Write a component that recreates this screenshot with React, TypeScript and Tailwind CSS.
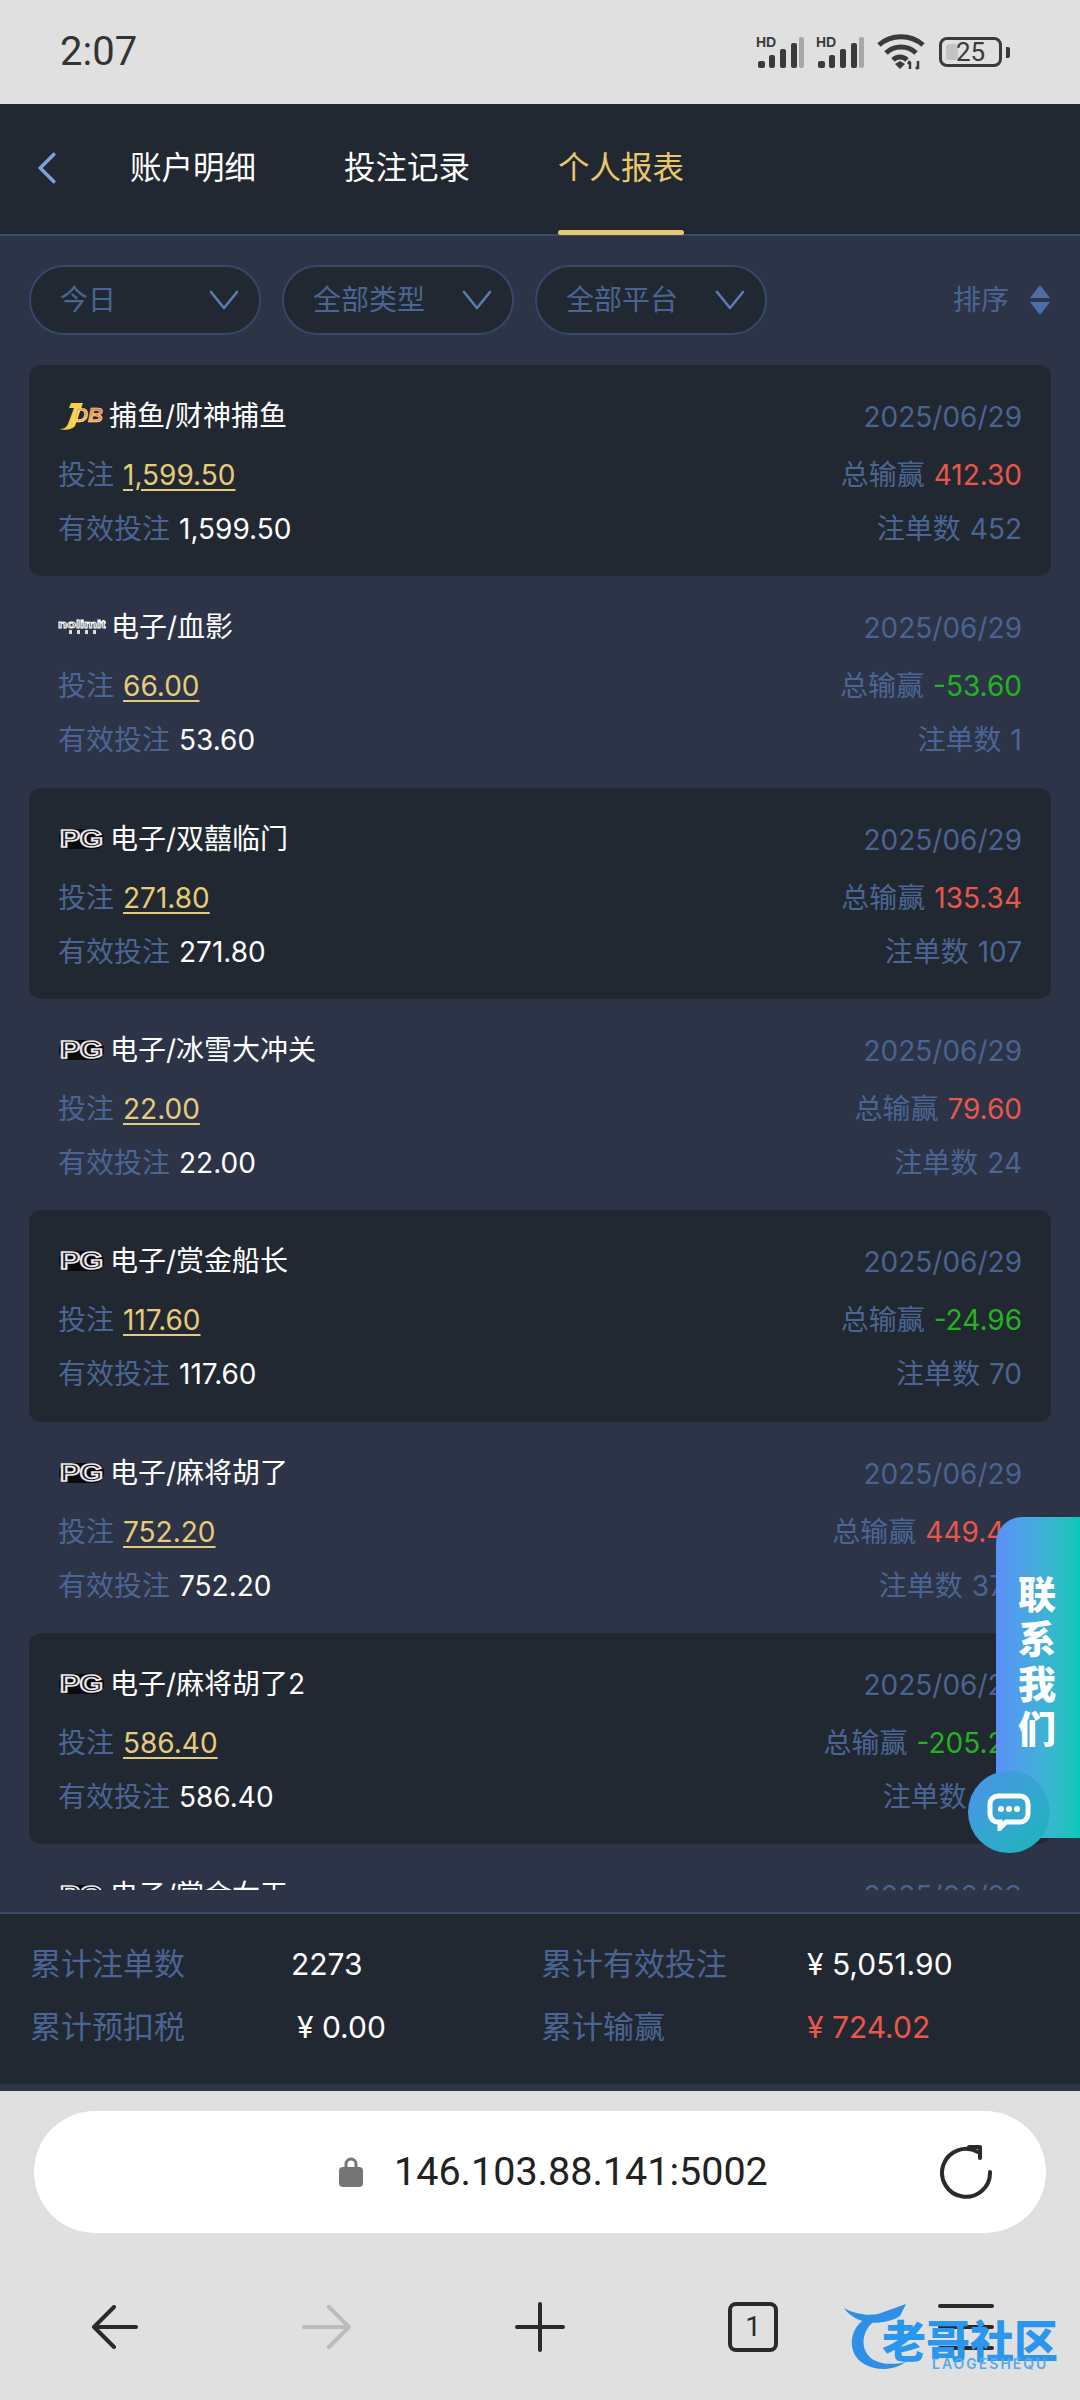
import { ChevronLeft } from 'lucide-react';

type Row = {
  logo: 'jdb' | 'nolimit' | 'pg';
  title: string;
  bet: string;
  valid: string;
  win: string;
  count: string;
};

const rows: Row[] = [
  { logo: 'jdb', title: '捕鱼/财神捕鱼', bet: '1,599.50', valid: '1,599.50', win: '412.30', count: '452' },
  { logo: 'nolimit', title: '电子/血影', bet: '66.00', valid: '53.60', win: '-53.60', count: '1' },
  { logo: 'pg', title: '电子/双囍临门', bet: '271.80', valid: '271.80', win: '135.34', count: '107' },
  { logo: 'pg', title: '电子/冰雪大冲关', bet: '22.00', valid: '22.00', win: '79.60', count: '24' },
  { logo: 'pg', title: '电子/赏金船长', bet: '117.60', valid: '117.60', win: '-24.96', count: '70' },
  { logo: 'pg', title: '电子/麻将胡了', bet: '752.20', valid: '752.20', win: '449.40', count: '372' },
  { logo: 'pg', title: '电子/麻将胡了2', bet: '586.40', valid: '586.40', win: '-205.26', count: '310' },
  { logo: 'pg', title: '电子/赏金女王', bet: '310.00', valid: '310.00', win: '120.00', count: '60' },
];

function Signal() {
  return (
    <svg width="48" height="34" viewBox="0 0 48 34">
      <text x="0" y="12" fontSize="14" fontWeight="700" fontFamily="Liberation Sans" fill="#3a3a3a">HD</text>
      <rect x="2" y="26" width="7" height="7" rx="2" fill="#3a3a3a" />
      <rect x="13" y="20" width="6" height="13" rx="2" fill="#3a3a3a" />
      <rect x="24" y="14" width="6" height="19" rx="2" fill="#3a3a3a" />
      <rect x="35" y="8" width="6" height="25" rx="2" fill="#3a3a3a" />
      <rect x="43" y="2" width="5" height="31" rx="2" fill="#a8a8a8" />
    </svg>
  );
}

function StatusIcons() {
  return (
    <div className="flex items-center">
      <Signal />
      <div className="ml-[12px]">
        <Signal />
      </div>
      <svg className="ml-[13px]" width="48" height="36" viewBox="0 0 48 36" fill="none" stroke="#3a3a3a" strokeWidth="5">
        <path d="M2 11C14 0 34 0 46 11" />
        <path d="M9 19C17 11 31 11 39 19" />
        <path d="M16 26C20 22 26 22 30 26" />
        <path d="M23 35l-5-5 5-3 5 3z" fill="#3a3a3a" stroke="none" />
        <path d="M33 35v-7M31 30l2-3M41 27v8M39 33l2 2" strokeWidth="2.5" />
      </svg>
      <div className="relative ml-[14px] flex h-[30px] w-[63px] items-center justify-center rounded-[8px] border-[3px] border-[#3a3a3a] text-[26px] leading-none text-[#3a3a3a] font-['Roboto',sans-serif]">
        <span className="absolute left-[4px] top-[4px] h-[16px] w-[12px] rounded-[3px] bg-[#c4c4c4]" />
        <span className="relative">25</span>
      </div>
      <div className="ml-[4px] h-[11px] w-[4px] rounded-r-[2px] bg-[#3a3a3a]" />
    </div>
  );
}

function Logo({ kind }: { kind: Row['logo'] }) {
  if (kind === 'jdb') {
    return (
      <svg width="46" height="28" viewBox="0 0 46 28" className="shrink-0">
        <defs>
          <linearGradient id="jdbFill" x1="0" y1="1" x2="1" y2="0">
            <stop offset="0" stopColor="#f7d53f" />
            <stop offset="0.5" stopColor="#f5a531" />
            <stop offset="1" stopColor="#ee4f4a" />
          </linearGradient>
        </defs>
        <path d="M1 27c5 0 7-1 9-5l6-16h-5l2-5h12l-8 23c-2 3-10 5-16 3z" fill="#f5cf45" />
        <text x="15" y="20" fontSize="21" fontWeight="900" fontStyle="italic" fontFamily="Liberation Sans" fill="url(#jdbFill)" stroke="#ffe9c9" strokeWidth="0.6" textLength="30" lengthAdjust="spacingAndGlyphs">DB</text>
      </svg>
    );
  }
  if (kind === 'nolimit') {
    return (
      <svg width="48" height="16" viewBox="0 0 48 16" className="shrink-0">
        <text x="0" y="9" fontSize="11" fontWeight="700" fontFamily="Liberation Sans" fill="#1a1d28" stroke="#fff" strokeWidth="0.9" textLength="48" lengthAdjust="spacingAndGlyphs">nolimit</text>
        <g fill="#ddd">
          <rect x="11" y="11" width="3" height="4" />
          <rect x="19" y="11" width="3" height="4" />
          <rect x="27" y="11" width="3" height="4" />
          <rect x="35" y="11" width="3" height="4" />
        </g>
      </svg>
    );
  }
  return (
    <svg width="47" height="24" viewBox="0 0 47 24" className="shrink-0">
      <rect x="1" y="2" width="45" height="20" rx="9" fill="#0b0b0d" />
      <text x="2" y="20" fontSize="23" fontWeight="700" fontFamily="Liberation Sans" fill="#16161a" stroke="#ece8ee" strokeWidth="1.7" textLength="43" lengthAdjust="spacingAndGlyphs">PG</text>
    </svg>
  );
}

function winColor(win: string) {
  return win.startsWith('-') ? 'text-[#22b41f]' : 'text-[#e8574a]';
}

function Card({ row, dark }: { row: Row; dark: boolean }) {
  return (
    <div className={`h-[211.33px] shrink-0 rounded-[12px] px-[29px] pt-[31px] text-[28px] leading-[40px] ${dark ? 'bg-[#222831]' : ''}`}>
      <div className="flex items-center justify-between">
        <div className="flex items-center gap-[5px] text-white">
          <Logo kind={row.logo} />
          <span>{row.title}</span>
        </div>
        <span className="translate-y-[1px] text-[#4a6390]">2025/06/29</span>
      </div>
      <div className="mt-[19px] flex justify-between">
        <div className="flex gap-[9px]">
          <span className="text-[#4a6593]">投注</span>
          <span className="text-[#e6cb7a] underline underline-offset-[4px]">{row.bet}</span>
        </div>
        <div className="flex gap-[9px]">
          <span className="text-[#4a6593]">总输赢</span>
          <span className={winColor(row.win)}>{row.win}</span>
        </div>
      </div>
      <div className="mt-[14px] flex justify-between">
        <div className="flex gap-[9px]">
          <span className="text-[#4a6593]">有效投注</span>
          <span className="text-white">{row.valid}</span>
        </div>
        <div className="flex gap-[9px] text-[#4a6593]">
          <span>注单数</span>
          <span>{row.count}</span>
        </div>
      </div>
    </div>
  );
}

function Pill({ label }: { label: string }) {
  return (
    <div className="flex h-[70px] w-[232px] items-center justify-between rounded-full border-2 border-[#36476a] bg-[#222831] pl-[29px] pr-[20px] text-[28px] text-[#4a6593]">
      <span>{label}</span>
      <svg width="30" height="20" viewBox="0 0 30 20" fill="none" stroke="#5a7cb4" strokeWidth="2.6" strokeLinecap="round" strokeLinejoin="round">
        <path d="M2 2l13 16L28 2" />
      </svg>
    </div>
  );
}

function Summary({ label, value, offset, red }: { label: string; value: string; offset: string; red?: boolean }) {
  return (
    <div className="flex items-center">
      <span className="text-[31px] text-[#4a6593]">{label}</span>
      <span className={`text-[30px] ${offset} ${red ? 'text-[#e8574a]' : 'text-white'}`}>{value}</span>
    </div>
  );
}

export default function App() {
  return (
    <div className="relative flex h-[2400px] w-[1080px] flex-col overflow-hidden bg-[#2d3447] font-['Inter','Noto_Sans_CJK_SC',sans-serif]">
      <div className="flex h-[104px] shrink-0 items-center justify-between bg-[#e0e0e0] pl-[60px] pr-[70px]">
        <span className="text-[40px] text-[#333] font-['Roboto',sans-serif]">2:07</span>
        <StatusIcons />
      </div>

      <div className="flex h-[132px] shrink-0 items-stretch border-b-2 border-[#3a4c6e] bg-[#222831]">
        <div className="flex w-[130px] items-center pl-[20px]">
          <ChevronLeft size={54} strokeWidth={1.6} className="mb-[2px] text-[#7ba1d8]" />
        </div>
        <div className="flex gap-[88px] text-[31.5px]">
          <div className="mb-[2px] flex items-center text-white">账户明细</div>
          <div className="mb-[2px] flex items-center text-white">投注记录</div>
          <div className="relative mb-[2px] flex items-center text-[#e8c76d]">
            个人报表
            <span className="absolute bottom-[-3px] left-0 h-[5px] w-full rounded-full bg-[#e8c76d]" />
          </div>
        </div>
      </div>

      <div className="flex items-center px-[29px] pt-[29px]">
        <div className="flex gap-[21px]">
          <Pill label="今日" />
          <Pill label="全部类型" />
          <Pill label="全部平台" />
        </div>
        <div className="ml-auto flex items-center gap-[20px] text-[28px] text-[#4a6593]">
          <span>排序</span>
          <svg width="22" height="30" viewBox="0 0 22 30" fill="#4a6fa5">
            <path d="M11 0l10 13H1z" />
            <path d="M11 30L1 17h20z" />
          </svg>
        </div>
      </div>

      <div className="mx-[29px] mt-[30px] flex h-[1525px] flex-col overflow-hidden">
        {rows.map((row, i) => (
          <Card key={row.title} row={row} dark={i % 2 === 0} />
        ))}
      </div>

      <div className="mt-[22px] h-[172px] shrink-0 border-t-2 border-[#3a4c6e] bg-[#222831] pl-[30px] pt-[30px] leading-[40px]">
        <div className="grid grid-cols-[511px_1fr] gap-y-[23px]">
          <Summary label="累计注单数" value="2273" offset="ml-[106px]" />
          <Summary label="累计有效投注" value="¥ 5,051.90" offset="ml-[80px]" />
          <Summary label="累计预扣税" value="¥ 0.00" offset="ml-[112px]" />
          <Summary label="累计输赢" value="¥ 724.02" offset="ml-[142px]" red />
        </div>
      </div>

      <div className="mt-[7px] flex flex-1 flex-col bg-[#e0e0e0]">
        <div className="mx-[34px] mt-[20px] flex h-[122px] shrink-0 items-center rounded-full bg-white pl-[305px] pr-[52px]">
          <svg width="24" height="30" viewBox="0 0 24 30" className="shrink-0">
            <path d="M7 11V7a5 5 0 0 1 10 0v4" fill="none" stroke="#757575" strokeWidth="3" />
            <rect x="0" y="10" width="24" height="20" rx="4" fill="#757575" />
          </svg>
          <span className="ml-[31px] text-[39.5px] text-[#222] font-['Roboto',sans-serif]">146.103.88.141:5002</span>
          <svg className="ml-auto" width="54" height="54" viewBox="0 0 54 54" fill="none" stroke="#2a2a2a" strokeWidth="4" strokeLinecap="round" strokeLinejoin="round">
            <path d="M38 7A24 24 0 1 0 50 27" />
            <path d="M29 2h11v11" />
          </svg>
        </div>
        <div className="grid grid-cols-5 items-center px-[7px] pt-[69px]">
          <div className="flex justify-center">
            <svg width="48" height="44" viewBox="0 0 48 44" fill="none" stroke="#2a2a2a" strokeWidth="4" strokeLinecap="round" strokeLinejoin="round">
              <path d="M24 2L4 22l20 20M4 22h42" />
            </svg>
          </div>
          <div className="flex justify-center">
            <svg width="52" height="44" viewBox="0 0 52 44" fill="none" stroke="#bcbcbc" strokeWidth="4" strokeLinecap="round" strokeLinejoin="round">
              <path d="M28 2l20 20-20 20M48 22H3" />
            </svg>
          </div>
          <div className="flex justify-center">
            <svg width="50" height="50" viewBox="0 0 50 50" fill="none" stroke="#2a2a2a" strokeWidth="4" strokeLinecap="round">
              <path d="M25 2v46M2 25h46" />
            </svg>
          </div>
          <div className="flex justify-center">
            <div className="flex h-[50px] w-[50px] items-center justify-center rounded-[8px] border-[4px] border-[#2a2a2a] text-[28px] leading-none text-[#2a2a2a] font-['Roboto',sans-serif]">1</div>
          </div>
          <div className="flex justify-center">
            <div className="flex w-[56px] flex-col gap-[17px]">
              <div className="h-[4px] rounded-full bg-[#2a2a2a]" />
              <div className="h-[4px] rounded-full bg-[#2a2a2a]" />
              <div className="h-[4px] rounded-full bg-[#2a2a2a]" />
            </div>
          </div>
        </div>
      </div>

      {/* contact widget */}
      <div className="absolute left-[996px] top-[1517px] flex h-[321px] w-[84px] flex-col items-center rounded-l-[26px] bg-gradient-to-r from-[#5b8ff9] to-[#00c9b7] pt-[55px] pr-[2px] text-[38px] font-black leading-[45px] text-white">
        <span>联</span>
        <span>系</span>
        <span>我</span>
        <span>们</span>
      </div>
      <div className="absolute left-[968px] top-[1771px] flex h-[82px] w-[82px] items-center justify-center rounded-full bg-gradient-to-br from-[#4a90e8] to-[#0bb8b8]">
        <svg width="44" height="38" viewBox="0 0 44 38">
          <path d="M11 3h22a8 8 0 0 1 8 8v10a8 8 0 0 1-8 8H19l-6 6v-6h-2a8 8 0 0 1-8-8V11a8 8 0 0 1 8-8z" fill="none" stroke="#fff" strokeWidth="5" />
          <circle cx="14" cy="16" r="3" fill="#fff" />
          <circle cx="22" cy="16" r="3" fill="#fff" />
          <circle cx="30" cy="16" r="3" fill="#fff" />
        </svg>
      </div>

      {/* watermark */}
      <div className="absolute left-[842px] top-[2302px] h-[72px] w-[222px]">
        <svg width="90" height="72" viewBox="0 0 90 72" className="absolute left-0 top-0" fill="none">
          <path d="M30 14C8 20 2 50 22 62c14 8 30 6 42-2-16 4-34 2-40-10-6-12 0-26 10-32z" fill="#2f8fe6" />
          <path d="M2 6c10 6 24 8 34 6l28-10-6 12c-8 6-24 8-34 6C14 18 6 12 2 6z" fill="#2f8fe6" />
        </svg>
        <span className="absolute left-[40px] top-[25px] whitespace-nowrap text-[44px] font-black leading-[30px] text-[#2b96ee]">老哥社区</span>
        <span className="absolute left-[90px] top-[55px] whitespace-nowrap text-[14px] font-semibold leading-[14px] tracking-[2px] text-[#5aa9ea]">LAOGESHEQU</span>
      </div>
    </div>
  );
}
